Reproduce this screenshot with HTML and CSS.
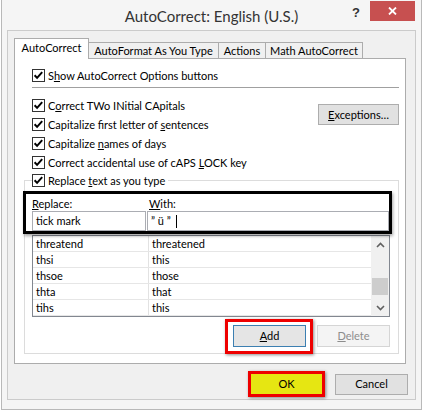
FILE: index.html
```html
<!DOCTYPE html>
<html lang="en">
<head>
<meta charset="utf-8">
<title>AutoCorrect: English (U.S.)</title>
<link rel="stylesheet" href="styles.css">
</head>
<body>
<div class="window">
  <header class="titlebar">
    <span class="title-spacer"></span>
    <h1 class="title">AutoCorrect: English (U.S.)</h1>
    <div class="title-actions">
      <span class="help">?</span>
      <span class="close"><svg width="9" height="8" viewBox="0 0 9 8"><path d="M1 0.5 L8 7.5 M8 0.5 L1 7.5" stroke="#fff" stroke-width="1.8" fill="none"/></svg></span>
    </div>
  </header>
  <div class="client">
    <div class="tabs">
      <div class="tab tab-active">AutoCorrect</div>
      <div class="tab tab-format">AutoFormat As You Type</div>
      <div class="tab tab-actions">Actions</div>
      <div class="tab tab-math">Math AutoCorrect</div>
    </div>
    <div class="panel">
      <label class="check check-show"><svg class="cb" width="13" height="13" viewBox="0 0 13 13"><rect x="0.5" y="0.5" width="12" height="12" fill="#fff" stroke="#333"/><path d="M2.6 6.3 L5.1 8.9 L10.2 3.2" fill="none" stroke="#000" stroke-width="2"/></svg><span>S<u>h</u>ow AutoCorrect Options buttons</span></label>
      <hr class="sep">
      <div class="options">
        <div class="option-list">
          <label class="check"><svg class="cb" width="13" height="13" viewBox="0 0 13 13"><rect x="0.5" y="0.5" width="12" height="12" fill="#fff" stroke="#333"/><path d="M2.6 6.3 L5.1 8.9 L10.2 3.2" fill="none" stroke="#000" stroke-width="2"/></svg><span>C<u>o</u>rrect TWo INitial CApitals</span></label>
          <label class="check"><svg class="cb" width="13" height="13" viewBox="0 0 13 13"><rect x="0.5" y="0.5" width="12" height="12" fill="#fff" stroke="#333"/><path d="M2.6 6.3 L5.1 8.9 L10.2 3.2" fill="none" stroke="#000" stroke-width="2"/></svg><span>Capitalize first letter of <u>s</u>entences</span></label>
          <label class="check"><svg class="cb" width="13" height="13" viewBox="0 0 13 13"><rect x="0.5" y="0.5" width="12" height="12" fill="#fff" stroke="#333"/><path d="M2.6 6.3 L5.1 8.9 L10.2 3.2" fill="none" stroke="#000" stroke-width="2"/></svg><span>Capitalize <u>n</u>ames of days</span></label>
          <label class="check"><svg class="cb" width="13" height="13" viewBox="0 0 13 13"><rect x="0.5" y="0.5" width="12" height="12" fill="#fff" stroke="#333"/><path d="M2.6 6.3 L5.1 8.9 L10.2 3.2" fill="none" stroke="#000" stroke-width="2"/></svg><span>Correct accidental use of cAPS <u>L</u>OCK key</span></label>
        </div>
        <button class="btn btn-exceptions"><u>E</u>xceptions…</button>
      </div>
      <fieldset class="group">
        <legend class="check legend"><svg class="cb" width="13" height="13" viewBox="0 0 13 13"><rect x="0.5" y="0.5" width="12" height="12" fill="#fff" stroke="#333"/><path d="M2.6 6.3 L5.1 8.9 L10.2 3.2" fill="none" stroke="#000" stroke-width="2"/></svg><span>Replace <u>t</u>ext as you type</span></legend>
        <div class="entry">
          <div class="entry-labels">
            <span class="lbl lbl-replace"><u>R</u>eplace:</span>
            <span class="lbl"><u>W</u>ith:</span>
          </div>
          <div class="entry-inputs">
            <div class="input input-replace">tick mark</div>
            <div class="input input-with">” ü ”<span class="caret"></span></div>
          </div>
        </div>
        <div class="list">
          <div class="rows">
            <div class="row"><span class="cell">threatend</span><span class="cell">threatened</span></div>
            <div class="row"><span class="cell">thsi</span><span class="cell">this</span></div>
            <div class="row"><span class="cell">thsoe</span><span class="cell">those</span></div>
            <div class="row"><span class="cell">thta</span><span class="cell">that</span></div>
            <div class="row"><span class="cell">tihs</span><span class="cell">this</span></div>
          </div>
          <div class="scrollbar">
            <div class="sb-btn"><svg width="9" height="6" viewBox="0 0 9 6"><path d="M1 5 L4.5 1.5 L8 5" fill="none" stroke="#606060" stroke-width="1.6"/></svg></div>
            <div class="sb-track"><div class="sb-thumb"></div></div>
            <div class="sb-btn"><svg width="9" height="6" viewBox="0 0 9 6"><path d="M1 1 L4.5 4.5 L8 1" fill="none" stroke="#606060" stroke-width="1.6"/></svg></div>
          </div>
        </div>
        <div class="group-buttons">
          <button class="btn btn-add"><u>A</u>dd</button>
          <button class="btn btn-delete" disabled><u>D</u>elete</button>
        </div>
      </fieldset>
    </div>
    <div class="footer">
      <button class="btn btn-ok">OK</button>
      <button class="btn btn-cancel">Cancel</button>
    </div>
  </div>
</div>
</body>
</html>
```
FILE: styles.css
```css
* { box-sizing: border-box; }
html, body { margin: 0; padding: 0; }
body {
  width: 422px;
  height: 411px;
  overflow: hidden;
  background: #ffffff;
  font-family: "Segoe UI", Lato, "Liberation Sans", sans-serif;
  font-size: 11px;
  color: #000;
}
u { text-decoration: underline; text-underline-offset: 1px; }

.window {
  width: 421px;
  height: 410px;
  margin-left: 1px;
  background: #f5f5f5;
  border: 1px solid #b9b9b9;
  border-top: none;
  padding: 0 5px 9px 5px;
  display: flex;
  flex-direction: column;
}

.titlebar {
  height: 30px;
  flex: none;
  display: grid;
  grid-template-columns: 1fr auto 1fr;
}
.title {
  margin: 0;
  align-self: center;
  font-family: "Segoe UI", Lato, "Liberation Sans", sans-serif;
  font-weight: 400;
  font-size: 15px;
  line-height: 20px;
  color: #333;
  white-space: nowrap;
  padding-top: 1px;
}
.title-actions {
  justify-self: end;
  display: flex;
  align-items: flex-start;
}
.help {
  font-family: "Liberation Sans", Arial, sans-serif;
  font-weight: 700;
  font-size: 13px;
  line-height: 20px;
  height: 20px;
  margin-top: 3px;
  margin-right: 10px;
  color: #333;
}
.close {
  width: 45px;
  height: 20px;
  margin-top: 1px;
  margin-right: 1px;
  background: #c75050;
  display: flex;
  align-items: center;
  justify-content: center;
}

.client {
  flex: 1;
  background: #f0f0f0;
  border: 1px solid #cbcbcb;
  padding: 7px 9px 0 6px;
  display: flex;
  flex-direction: column;
}

.tabs {
  height: 20px;
  display: flex;
  align-items: flex-end;
}
.tab {
  height: 16px;
  border: 1px solid #acacac;
  border-bottom: none;
  background: #f0f0f0;
  margin-left: -1px;
  text-align: center;
  line-height: 15px;
  white-space: nowrap;
}
.tab-active {
  position: relative;
  z-index: 1;
  margin-left: 0;
  width: 75px;
  height: 21px;
  margin-bottom: -1px;
  background: #fff;
  line-height: 18px;
}
.tab-format { width: 131px; }
.tab-actions { width: 48px; }
.tab-math { width: 98px; }

.panel {
  height: 306px;
  flex: none;
  background: #fff;
  border: 1px solid #acacac;
  padding: 7px 6px 0 17px;
}

.check {
  display: flex;
  align-items: center;
  gap: 3px;
  height: 19px;
  white-space: nowrap;
}
.cb { flex: none; display: block; }
.check-show { height: 18px; }

.sep {
  margin: 3px 0 0;
  border: none;
  border-top: 1px solid #a0a0a0;
  height: 0;
}

.options {
  margin-top: 8px;
  display: flex;
  justify-content: space-between;
  align-items: flex-start;
}

.btn {
  font-family: inherit;
  font-size: 11px;
  color: #000;
  padding: 0;
  background: #e1e1e1;
  border: 1px solid #adadad;
  line-height: 18px;
}
.btn-exceptions {
  width: 81px;
  height: 21px;
  margin-top: 8px;
}

.group {
  margin: 0 0 0 -8px;
  border: 1px solid #dcdcdc;
  padding: 0 8px 6px 7px;
  min-width: 0;
}
.legend {
  height: 17px;
  padding: 0 3px 0 0;
  background: #fff;
}

.entry {
  position: relative;
  margin-top: 7px;
  margin-right: 1px;
}
.entry::after {
  content: "";
  position: absolute;
  top: -5px;
  left: -9px;
  right: -3px;
  bottom: -3px;
  border: 3px solid #000;
  box-shadow: 1px 2px 3px rgba(0,0,0,0.35);
  pointer-events: none;
}
.entry-labels {
  display: flex;
  height: 15px;
  line-height: 15px;
}
.lbl-replace { width: 117px; }
.entry-inputs {
  display: flex;
  gap: 1px;
}
.input {
  height: 20px;
  border: 1px solid #abadb3;
  background: #fff;
  padding-left: 3px;
  line-height: 18px;
  display: flex;
  align-items: center;
  white-space: pre;
}
.input-replace { width: 114px; }
.input-with { flex: 1; }
.caret {
  display: inline-block;
  width: 1px;
  height: 13px;
  background: #000;
  margin-left: 5px;
}

.list {
  margin-top: 4px;
  height: 82px;
  border: 1px solid #828790;
  display: flex;
  background: #fff;
}
.rows {
  flex: 1;
  overflow: hidden;
}
.row {
  display: grid;
  grid-template-columns: 116px 1fr;
  height: 16px;
  border-bottom: 1px solid #e6e6e6;
  line-height: 15px;
}
.cell {
  padding-left: 3px;
  white-space: nowrap;
}
.cell:first-child { border-right: 1px solid #e2e2e2; }

.scrollbar {
  width: 18px;
  flex: none;
  background: #f0f0f0;
  display: flex;
  flex-direction: column;
}
.sb-btn {
  height: 17px;
  display: flex;
  align-items: center;
  justify-content: center;
}
.sb-track { flex: 1; }
.sb-thumb {
  margin: 25px 1px 0;
  height: 17px;
  background: #cdcdcd;
}

.group-buttons {
  margin-top: 8px;
  display: flex;
  justify-content: flex-end;
  gap: 11px;
}
.btn-add, .btn-delete {
  width: 73px;
  height: 22px;
}
.btn-add {
  position: relative;
  background: #e5e5e5;
  border-color: #3c7fb1;
}
.btn-add::after {
  content: "";
  position: absolute;
  top: -7px;
  left: -9px;
  right: -8px;
  bottom: -8px;
  border: 3px solid #ee0000;
  box-shadow: 1px 1px 3px rgba(0,0,0,0.45);
  pointer-events: none;
}
.btn-delete {
  background: #f4f4f4;
  border-color: #d5d5d5;
  color: #8d8d8d;
}

.footer {
  margin-top: 7px;
  margin-right: -2px;
  display: flex;
  justify-content: flex-end;
  align-items: center;
  gap: 10px;
}
.btn-ok {
  width: 77px;
  height: 26px;
  border: 3px solid #ee0000;
  background: #e6e612;
  box-shadow: 1px 1px 3px rgba(0,0,0,0.45);
}
.btn-cancel {
  width: 73px;
  height: 21px;
}
```
